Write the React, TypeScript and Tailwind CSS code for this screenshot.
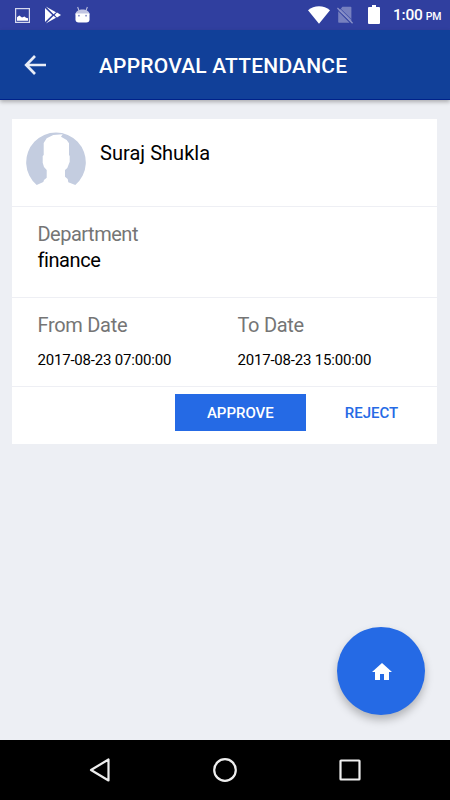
import type { ReactNode } from "react";

const StatusBar = () => (
  <div className="flex h-[30px] items-center justify-between bg-[#303f9f] text-white">
    <div className="flex items-center">
      <svg className="ml-[15px] h-[15px] w-[15px]" viewBox="0 0 15 15">
        <rect x="0.6" y="0.6" width="13.8" height="13.8" fill="none" stroke="#d6d9ee" strokeWidth="1.2" />
        <path d="M2 12.7V9.2L4.3 7.6L7 9.6L9.5 8.6L11 9.8L13 10.2V12.7Z" fill="#fff" />
      </svg>
      <svg className="ml-[14px] h-[18px] w-[18px]" viewBox="0 0 18 18">
        <path d="M1.8 0.5L12 6.2L9.6 8.2Z" fill="#fff" />
        <path d="M1.8 17.5L12 11.8L9.6 9.8Z" fill="#fff" />
        <path d="M1 2L8.2 9L1 16Z" fill="#fff" />
        <path d="M13 6.6L17 9L13 11.4L10.6 9Z" fill="#fff" />
      </svg>
      <svg className="mb-px ml-[13px] h-[18px] w-[15px]" viewBox="0 0 16 18">
        <path d="M4.3 4.5L2.8 0.5M11.7 4.5L13.2 0.5" stroke="#c1c5e2" strokeWidth="1.1" />
        <path d="M0.5 8.5C0.5 1.5 15.5 1.5 15.5 8.5Z" fill="#c1c5e2" />
        <path d="M0.5 7.5H15.5V13.5Q15.5 17 12 17H4Q0.5 17 0.5 13.5Z" fill="#fff" />
        <circle cx="4.2" cy="9.7" r="0.9" fill="#7780bf" />
        <circle cx="11.8" cy="9.7" r="0.9" fill="#7780bf" />
      </svg>
    </div>
    <div className="flex items-center">
      <svg className="h-[18px] w-[22px]" viewBox="0 0 22 18">
        <path d="M0 4.2C6 -1 16 -1 22 4.2L11 17.7Z" fill="#fff" />
      </svg>
      <svg className="ml-[7px] h-[18px] w-4" viewBox="0 0 16 18">
        <path d="M5.4 0.8H13.6Q14.4 0.8 14.4 1.6V13L3.8 2.8ZM1.2 5.2L12.6 16.8H2Q1.2 16.8 1.2 16Z" fill="#7780bf" />
        <path d="M3.5 3L14.4 13.5V16L1.5 4.5Z" fill="#7780bf" />
        <path d="M0.4 2L15.6 17.2" stroke="#8c93c9" strokeWidth="1.3" />
      </svg>
      <svg className="mb-px ml-[15px] h-[19px] w-3" viewBox="0 0 12 19">
        <path d="M4 0H8V2H11Q12 2 12 3V18Q12 19 11 19H1Q0 19 0 18V3Q0 2 1 2H4Z" fill="#fff" />
      </svg>
      <span className="mt-[2px] mr-[9px] ml-[13px] w-[48px] text-[15.5px] leading-5 font-medium tracking-[-0.2px] whitespace-nowrap">
        1:00<span className="ml-[3px] text-[10.5px]">PM</span>
      </span>
    </div>
  </div>
);

const Header = () => (
  <header className="relative flex h-[70px] items-center border-b border-[#00228a] bg-[#114099] text-white shadow-[0_2px_4px_rgba(0,0,0,0.28)]">
    <svg className="mt-px ml-6 h-5 w-[22px]" viewBox="0 0 22 20" fill="none" stroke="#e9edf7" strokeWidth="2.7">
      <path d="M22 10H2.5M11 1L2.2 10L11 19" />
    </svg>
    <h1 className="mt-[5px] ml-[53px] text-[21px] font-medium tracking-[0.2px] whitespace-nowrap">
      APPROVAL ATTENDANCE
    </h1>
  </header>
);

const Avatar = () => (
  <svg className="h-[60px] w-[60px] shrink-0" viewBox="0 0 60 60">
    <path
      d="M10.7 53A29.8 29.8 0 1 1 49.3 53L42.3 50.3L41.7 47L39 44.7V38L41.3 36L43.7 29.7V24L43 23V11.3L40.7 8L35 4.7L36.7 2.3L27.3 3L20.7 6.3L17.7 11V23L16.7 24V30.7L18 35L20.7 38V45.7L18 48L17.3 50Z"
      fill="#c4cde0"
    />
  </svg>
);

const Section = ({ className, children }: { className: string; children: ReactNode }) => (
  <section className={`border-b border-[#eeeff4] ${className}`}>{children}</section>
);

const dates = [
  { label: "From Date", value: "2017-08-23 07:00:00" },
  { label: "To Date", value: "2017-08-23 15:00:00" },
];

const App = () => (
  <div className="flex h-[800px] w-[450px] flex-col overflow-hidden bg-[#edeff4] font-[Roboto,sans-serif] text-black">
    <StatusBar />
    <Header />
    <main className="relative flex-1 px-[12.4px] pt-[19px]">
      <div className="h-[325px] w-[425px] bg-white">
        <Section className="flex h-[88px] pt-[13px] pl-[13.6px]">
          <Avatar />
          <span className="ml-[14px] pt-[9px] text-[20px] leading-6 tracking-[0.04px] whitespace-nowrap">
            Suraj Shukla
          </span>
        </Section>
        <Section className="h-[91px] pt-[15px] pl-[25px]">
          <div className="text-[20px] leading-6 tracking-[-0.48px] text-[#757575]">Department</div>
          <div className="mt-[2px] text-[20px] leading-6 tracking-[-0.4px]">finance</div>
        </Section>
        <Section className="flex h-[89px] pt-[15px] pl-[25px]">
          {dates.map(({ label, value }) => (
            <div key={label} className="w-[200px] shrink-0">
              <div className="text-[20px] leading-6 tracking-[-0.28px] text-[#757575]">{label}</div>
              <div className="mt-[13px] text-[15px] leading-5 tracking-[-0.18px] whitespace-nowrap">{value}</div>
            </div>
          ))}
        </Section>
        <div className="flex pt-[7px] pl-[162.6px] text-[15px] font-medium">
          <button className="h-[37px] w-[131px] bg-[#256ae5] pt-[2px] text-white">APPROVE</button>
          <button className="h-[37px] w-[132px] pt-[2px] text-[#256ae5]">REJECT</button>
        </div>
      </div>
      <button className="absolute top-[527.4px] left-[337.4px] flex h-[87.5px] w-[87.5px] items-center justify-center rounded-full bg-[#256ae5] shadow-[0_5px_9px_rgba(0,0,0,0.25)]">
        <svg className="mt-px ml-[2px] h-[17px] w-5" viewBox="0 0 20 17">
          <path d="M10 0L20 9H17V17H12V11H8V17H3V9H0Z" fill="#fff" />
        </svg>
      </button>
    </main>
    <nav className="flex h-[60px] items-center bg-black pl-[89px]">
      <svg className="h-6 w-[22px]" viewBox="0 0 22 24" fill="none" stroke="#eee" strokeWidth="2.2">
        <path d="M19.5 1.5V22.5L2 12Z" strokeLinejoin="round" />
      </svg>
      <svg className="ml-[102px] h-6 w-6" viewBox="0 0 24 24" fill="none" stroke="#eee" strokeWidth="2.2">
        <circle cx="12" cy="12" r="10.8" />
      </svg>
      <svg className="ml-[102px] h-[22px] w-[22px]" viewBox="0 0 22 22" fill="none" stroke="#eee" strokeWidth="2.2">
        <rect x="1.5" y="1.5" width="19" height="19" rx="0.5" />
      </svg>
    </nav>
  </div>
);

export default App;
